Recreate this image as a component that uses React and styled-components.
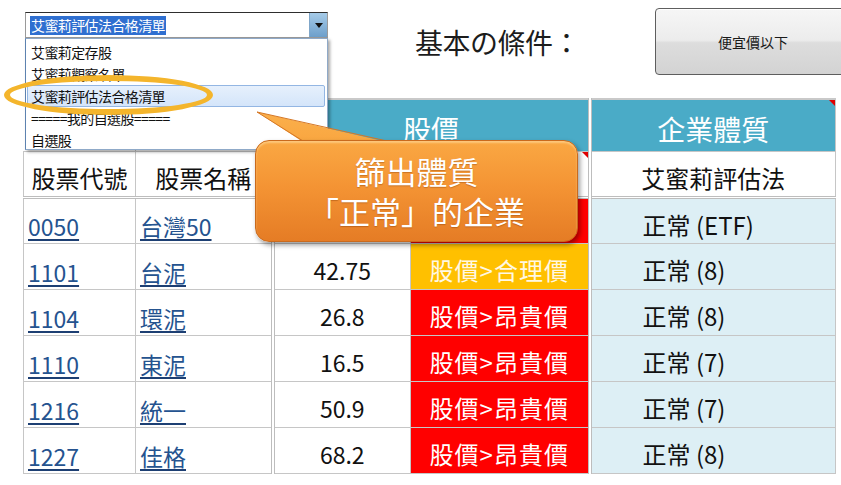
import React from 'react';
import styled, { createGlobalStyle } from 'styled-components';

const GlobalStyle = createGlobalStyle`
html, body {
  margin:0;
  padding:0;
  background:#fff;
}
body {
  font-family:"Noto Sans CJK TC", "Noto Sans", sans-serif;
  color:#111;
}
`;

const Page = styled.div`
position:relative;
width:841px;
height:485px;
overflow:hidden;
background:#fff;
`;

const TopBar = styled.div`
display:flex;
align-items:flex-start;
height:98px;
padding-left:25px;
`;

const ComboWrap = styled.div`
position:relative;
flex-shrink:0;
margin-top:12px;
width:303px;
`;

const Combo = styled.div`
display:flex;
height:26px;
box-sizing:border-box;
border:1px solid #9a9a9a;
border-top-color:#2e2e2e;
background:#fff;
`;

const ComboValue = styled.div`
flex:1;
display:flex;
align-items:center;
padding-left:4px;
`;

const Selected = styled.span`
background:#2f6fd0;
color:#fff;
font-size:14px;
letter-spacing:-0.6px;
line-height:19px;
padding:0 1px;
`;

const ComboArrow = styled.div`
width:17px;
display:flex;
align-items:center;
justify-content:center;
background:linear-gradient(#a6cbe8, #6d9fcb);
border-left:1px solid #7fa6c9;
&::after {
  content:"";
  border-left:4px solid transparent;
  border-right:4px solid transparent;
  border-top:5px solid #111;
}
`;

const DropList = styled.ul`
position:absolute;
top:100%;
left:0;
z-index:2;
width:303px;
height:112px;
box-sizing:border-box;
margin:0;
padding:2px 2px 0 1px;
list-style:none;
background:#fff;
border:1px solid #8fa9c8;
border-left-color:#5d82b0;
box-shadow:2px 2px 3px rgba(0,0,0,0.35);
`;

const DropItem = styled.li`
height:22px;
box-sizing:border-box;
padding-left:3px;
font-size:14px;
letter-spacing:-0.6px;
line-height:20px;
color:#111;
white-space:nowrap;
border:1px solid ${p => p.$active ? '#93b6e3' : 'transparent'};
border-radius:2px;
background:${p => p.$active ? 'linear-gradient(#e6f0fc, #d4e5fa)' : 'transparent'};
`;

const Title = styled.div`
flex-shrink:0;
margin-left:87px;
margin-top:22px;
font-size:28px;
line-height:40px;
letter-spacing:-0.5px;
white-space:nowrap;
color:#1c1c1c;
`;

const FilterButton = styled.div`
margin-left:75px;
margin-top:8px;
flex-shrink:0;
width:196px;
height:67px;
box-sizing:border-box;
display:flex;
align-items:center;
justify-content:center;
font-size:14px;
color:#1a1a1a;
border:1px solid #5e5e5e;
border-radius:4px;
background:linear-gradient(#f6f6f6 0%, #ececec 48%, #dddddd 52%, #d3d3d3 100%);
box-shadow:inset 0 1px 0 #fff;
`;

const Sheet = styled.table`
margin-left:23px;
width:812px;
table-layout:fixed;
border-collapse:collapse;
`;

const Cell = styled.td`
position:relative;
box-sizing:border-box;
padding:8px 0 0 0;
border:1px solid #c6c6c6;
border-right:${p => p.$split ? '4px double #bdbdbd' : '1px solid #c6c6c6'};
text-align:center;
vertical-align:middle;
white-space:nowrap;
font-size:24px;
line-height:28px;
color:#111;
`;

const HeadRow = styled.tr`
height:52px;
`;

const LabelRow = styled.tr`
height:46px;
`;

const DataRow = styled.tr`
height:46px;
`;

const BlankHead = styled(Cell)`
border-top:none;
border-left:none;
`;

const GroupHead = styled(Cell)`
background:#4aabc7;
color:#fff;
font-size:28px;
border-top:2px solid #c9c9c9;
`;

const LabelCell = styled(Cell)`
border-bottom:3px double #bdbdbd;
`;

const LinkCell = styled(Cell)`
text-align:left;
vertical-align:bottom;
padding:0 0 4px 4px;
font-size:23px;
line-height:26px;
`;

const StockLink = styled.a`
color:#25538f;
text-decoration:underline;
text-decoration-color:#1d3f73;
text-underline-offset:3px;
`;

const PriceCell = styled(Cell)`
font-size:23px;
`;

const StatusCell = styled(Cell)`
background:${p => p.$level === 'mid' ? '#ffc000' : '#ff0000'};
color:${p => p.$level === 'mid' ? '#fff8e4' : '#fff'};
letter-spacing:1px;
`;

const NoteCell = styled(Cell)`
background:#ddeff5;
text-align:left;
padding-left:51px;
`;

const CornerMark = styled.span`
position:absolute;
top:0;
right:0;
width:0;
height:0;
border-top:6px solid #e00000;
border-left:6px solid transparent;
`;

const Ring = styled.div`
position:absolute;
left:4px;
top:75px;
z-index:3;
width:209px;
height:40px;
box-sizing:border-box;
border:6px solid #f4b52c;
border-radius:50%;
`;

const Callout = styled.div`
position:absolute;
left:255px;
top:140px;
z-index:4;
width:323px;
height:102px;
`;

const CalloutTail = styled.svg`
position:absolute;
left:0;
top:-30px;
overflow:visible;
`;

const CalloutBody = styled.div`
position:relative;
height:100%;
box-sizing:border-box;
display:flex;
flex-direction:column;
align-items:center;
justify-content:center;
border:1px solid #c96a1d;
border-radius:14px;
background:linear-gradient(#faa843 0%, #f49434 45%, #e57c25 100%);
box-shadow:2px 3px 5px rgba(0,0,0,0.4), inset 0 2px 2px rgba(255,220,160,0.6);
color:#fff;
font-size:31px;
line-height:40px;
text-shadow:0 1px 1px rgba(120,50,0,0.35);
`;

const rows = [
  { code: '0050', name: '台灣50', price: '', level: 'high', note: '正常 (ETF)', hidden: true },
  { code: '1101', name: '台泥', price: '42.75', level: 'mid', note: '正常 (8)' },
  { code: '1104', name: '環泥', price: '26.8', level: 'high', note: '正常 (8)' },
  { code: '1110', name: '東泥', price: '16.5', level: 'high', note: '正常 (7)' },
  { code: '1216', name: '統一', price: '50.9', level: 'high', note: '正常 (7)' },
  { code: '1227', name: '佳格', price: '68.2', level: 'high', note: '正常 (8)' },
];

const lists = ['艾蜜莉定存股', '艾蜜莉觀察名單', '艾蜜莉評估法合格清單', '=====我的自選股=====', '自選股'];

const statusText = (r) => {
  if (r.hidden) return '';
  return r.level === 'mid' ? '股價>合理價' : '股價>昂貴價';
}

const App = () => {
  return <Page>
    <GlobalStyle />
    <TopBar>
      <ComboWrap>
        <Combo>
          <ComboValue><Selected>艾蜜莉評估法合格清單</Selected></ComboValue>
          <ComboArrow />
        </Combo>
        <DropList>
          {lists.map((l, i) => <DropItem key={l} $active={i === 2}>{l}</DropItem>)}
        </DropList>
      </ComboWrap>
      <Title>基本の條件：</Title>
      <FilterButton>便宜價以下</FilterButton>
    </TopBar>

    <Sheet>
      <colgroup>
        <col style={{ width: 112 }} />
        <col style={{ width: 137 }} />
        <col style={{ width: 138 }} />
        <col style={{ width: 179 }} />
        <col style={{ width: 246 }} />
      </colgroup>
      <tbody>
        <HeadRow>
          <BlankHead />
          <BlankHead $split />
          <GroupHead colSpan={2} $split>股價</GroupHead>
          <GroupHead>企業體質<CornerMark /></GroupHead>
        </HeadRow>
        <LabelRow>
          <LabelCell>股票代號</LabelCell>
          <LabelCell $split>股票名稱</LabelCell>
          <LabelCell />
          <LabelCell $split><CornerMark /></LabelCell>
          <LabelCell>艾蜜莉評估法</LabelCell>
        </LabelRow>
        {rows.map(r => <DataRow key={r.code}>
          <LinkCell><StockLink>{r.code}</StockLink></LinkCell>
          <LinkCell $split><StockLink>{r.name}</StockLink></LinkCell>
          <PriceCell>{r.price}</PriceCell>
          <StatusCell $split $level={r.level}>{statusText(r)}</StatusCell>
          <NoteCell>{r.note}</NoteCell>
        </DataRow>)}
      </tbody>
    </Sheet>

    <Ring />

    <Callout>
      <CalloutTail width="135" height="32" viewBox="0 0 135 32">
        <defs>
          <linearGradient id="tailFill" x1="0" y1="0" x2="0" y2="1">
            <stop offset="0" stopColor="#fbb04c" />
            <stop offset="1" stopColor="#f9a640" />
          </linearGradient>
        </defs>
        <polygon points="2,2 48,32 132,32" fill="url(#tailFill)" />
        <polyline points="48,31 2,2 132,31" fill="none" stroke="#d57725" strokeWidth="1" />
      </CalloutTail>
      <CalloutBody>
        <div>篩出體質</div>
        <div>「正常」的企業</div>
      </CalloutBody>
    </Callout>
  </Page>
}

export default App;
